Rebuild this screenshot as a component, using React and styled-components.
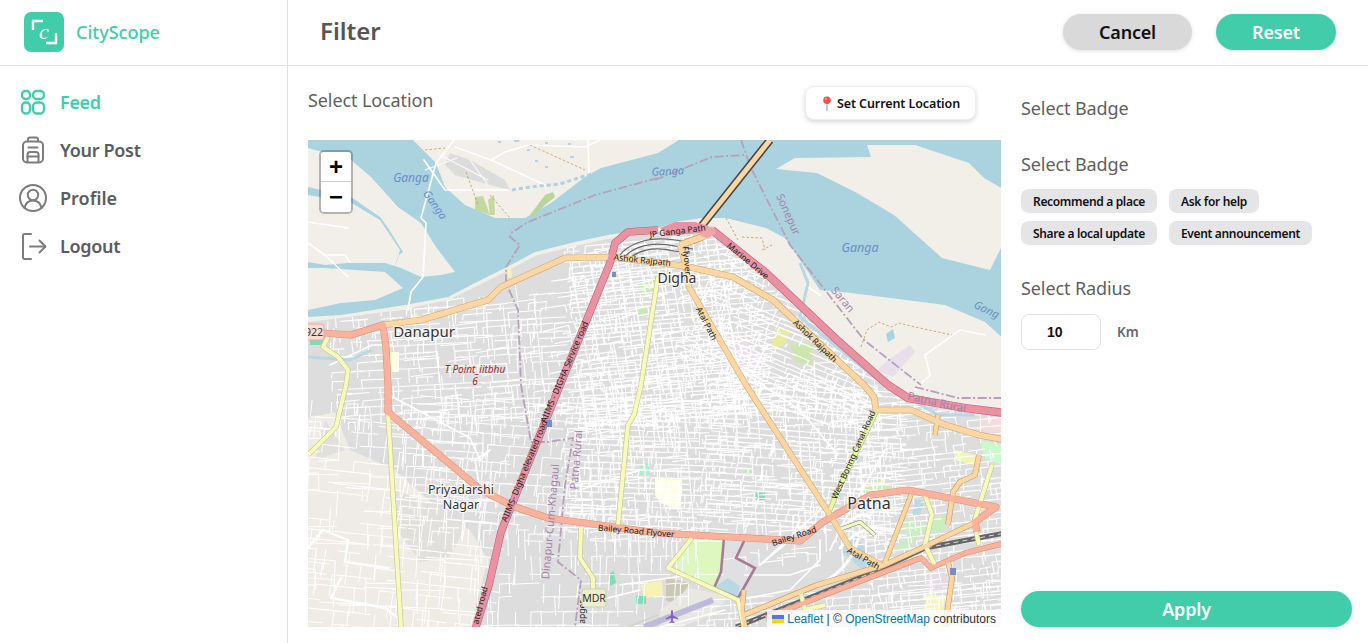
import React from "react";
import styled, { createGlobalStyle } from "styled-components";

const TEAL = "#41cdaa";
const UI = `"Noto Sans", "Open Sans", sans-serif`;

const Global = createGlobalStyle`
  html, body { margin: 0; padding: 0; background: #fff; overflow: hidden; }
  * { box-sizing: border-box; }
`;

const Page = styled.div`
  display: flex;
  width: 1368px;
  height: 643px;
  font-family: ${UI};
  color: #555;
  background: #fff;
`;
const Sidebar = styled.aside`
  width: 288px;
  flex: none;
  border-right: 1px solid #e2e2e2;
`;
const Brand = styled.div`
  height: 66px;
  display: flex;
  align-items: center;
  gap: 12px;
  padding: 0 0 2px 24px;
  border-bottom: 1px solid #e2e2e2;
`;
const LogoMark = styled.div`
  position: relative;
  width: 40px;
  height: 40px;
  border-radius: 7px;
  background: ${TEAL};
  display: flex;
  align-items: center;
  justify-content: center;
  font-family: "Liberation Serif", serif;
  font-style: italic;
  font-size: 22px;
  line-height: 36px;
  color: #fff;
`;
const LogoCorners = styled.svg`
  position: absolute;
  inset: 0;
`;
const BrandName = styled.span`
  color: ${TEAL};
  font-size: 18px;
  font-weight: 500;
`;
const Nav = styled.nav`
  display: flex;
  flex-direction: column;
  padding-top: 12px;
`;
const NavRow = styled.div`
  height: 48px;
  display: flex;
  align-items: center;
  gap: 12px;
  padding-left: 18px;
  font-size: 18px;
  font-weight: 600;
  letter-spacing: ${(p) => p.$track || "-0.3px"};
  color: ${(p) => (p.$active ? TEAL : "#5b5b60")};
`;
const NavIcon = styled.svg`
  width: 30px;
  height: 30px;
  flex: none;
  fill: none;
  stroke: ${(p) => (p.$active ? TEAL : "#7c7c7c")};
  stroke-width: ${(p) => p.$weight || 2};
  stroke-linecap: round;
  stroke-linejoin: round;
`;
const Main = styled.main`
  flex: 1;
  display: flex;
  flex-direction: column;
  min-width: 0;
`;
const TopBar = styled.header`
  height: 66px;
  flex: none;
  display: flex;
  align-items: center;
  padding: 0 32px 1px 32px;
  border-bottom: 1px solid #e2e2e2;
`;
const Title = styled.h1`
  margin: -3px auto 0 0;
  font-size: 24px;
  font-weight: 600;
  color: #555;
`;
const PillButton = styled.button`
  font-family: ${UI};
  height: 36px;
  width: ${(p) => p.$width || "100%"};
  margin-left: ${(p) => p.$gap || 0};
  border: none;
  border-radius: 18px;
  font-size: 18px;
  font-weight: 600;
  letter-spacing: -0.2px;
  padding: 0;
  background: ${(p) => (p.$muted ? "#d9d9d9" : TEAL)};
  color: ${(p) => (p.$muted ? "#111" : "#fff")};
  box-shadow: 0 1px 4px rgba(0, 0, 0, 0.12);
`;
const Body = styled.div`
  flex: 1;
  display: flex;
  padding-left: 20px;
  min-height: 0;
`;
const LeftCol = styled.section`
  width: 693px;
  flex: none;
  display: flex;
  flex-direction: column;
`;
const LocationHead = styled.div`
  height: 74px;
  flex: none;
  display: flex;
  justify-content: space-between;
  align-items: flex-start;
  padding: 20px 25px 0 0;
`;
const Label = styled.h2`
  margin: 0;
  font-size: 18px;
  line-height: 28px;
  font-weight: 400;
  color: #5f5f5f;
  letter-spacing: -0.1px;
`;
const LocationButton = styled.button`
  font-family: ${UI};
  height: 34px;
  width: 171px;
  display: flex;
  align-items: center;
  justify-content: center;
  gap: 4px;
  background: #fff;
  border: 1px solid #eee;
  border-radius: 9px;
  box-shadow: 0 2px 5px rgba(0, 0, 0, 0.16);
  font-size: 12.5px;
  font-weight: 600;
  letter-spacing: -0.1px;
  color: #111;
  padding: 0;
`;
const MapFrame = styled.div`
  position: relative;
  width: 693px;
  height: 487px;
  overflow: hidden;
  background: #aad3df;
`;
const MapArt = styled.svg`
  display: block;
  width: 693px;
  height: 487px;
`;
const ZoomBox = styled.div`
  position: absolute;
  left: 11px;
  top: 10px;
  width: 34px;
  border: 2px solid rgba(0, 0, 0, 0.25);
  border-radius: 5px;
  background-clip: padding-box;
  overflow: hidden;
`;
const ZoomBtn = styled.div`
  height: 30px;
  display: flex;
  align-items: center;
  justify-content: center;
  background: #fff;
  color: #000;
  font-family: "Liberation Sans", sans-serif;
  font-weight: 700;
  font-size: 24px;
  line-height: 30px;
  border-bottom: ${(p) => (p.$last ? "none" : "1px solid #ccc")};
`;
const Attribution = styled.div`
  position: absolute;
  right: 0;
  bottom: 0;
  height: 17px;
  padding: 0 5px;
  display: flex;
  align-items: center;
  gap: 3px;
  background: rgba(255, 255, 255, 0.8);
  font-family: "Liberation Sans", sans-serif;
  font-size: 12px;
  color: #333;
  white-space: pre;
`;
const AttrLink = styled.span`
  color: #0078a8;
`;
const RightCol = styled.section`
  flex: 1;
  display: flex;
  flex-direction: column;
  padding: 28px 16px 16px 20px;
`;
const BadgeHead = styled(Label)`
  margin-bottom: ${(p) => p.$after || 0};
`;
const ChipWrap = styled.div`
  display: flex;
  flex-wrap: wrap;
  gap: 8px 12px;
  width: 300px;
  margin-bottom: 29px;
`;
const Chip = styled.span`
  height: 24px;
  display: flex;
  align-items: center;
  padding: 0 12px;
  border-radius: 8px;
  background: #e5e5e8;
  font-size: 12px;
  font-weight: 600;
  letter-spacing: -0.33px;
  color: #111;
  white-space: nowrap;
`;
const RadiusRow = styled.div`
  display: flex;
  align-items: center;
  gap: 16px;
  margin-top: 12px;
`;
const RadiusInput = styled.input`
  width: 80px;
  height: 36px;
  border: 1px solid #e2e2e2;
  border-radius: 8px;
  padding: 0 0 0 25px;
  font-family: "Liberation Sans", sans-serif;
  font-size: 14px;
  font-weight: 700;
  color: #111;
  outline: none;
`;
const Unit = styled.span`
  font-size: 13.5px;
  font-weight: 600;
  color: #666;
`;
const Spacer = styled.div`
  flex: 1;
`;

/* ---------- map data (coordinates are the page's, via the svg viewBox) ---------- */

const pts = (a) => "M" + a.map((p) => p.join(" ")).join("L");
const poly = (a) => a.map((p) => p.join(",")).join(" ");

const southBank = [[308,317],[341,315],[405,305],[448,297],[475,283],[505,268],[535,252],[575,242],[608,235],[658,228],[675,222],[702,218],[726,218],[766,228],[785,238],[800,260],[820,290],[851,293],[945,305],[985,322],[1005,340],[1005,630],[308,630]];
const urban = [[308,322],[341,318],[405,309],[448,300],[475,287],[505,272],[535,256],[575,246],[608,239],[658,232],[712,226],[766,273],[837,340],[885,385],[908,398],[965,410],[1005,414],[1005,630],[308,630]];
const northBank = [[411,138],[436,163],[445,187],[465,205],[495,218],[525,218],[551,203],[585,177],[601,168],[658,153],[682,138]];
const sandA = [[308,148],[351,160],[371,177],[398,207],[421,223],[436,247],[455,272],[441,275],[421,277],[401,268],[395,266],[399,255],[403,252],[388,228],[380,217],[351,197],[308,187]];
const sandB = [[308,195],[350,202],[380,220],[400,250],[395,266],[385,263],[348,263],[325,265],[308,262]];
const sandC = [[308,268],[325,268],[385,272],[403,288],[375,300],[341,303],[308,310]];
const sandNE = [[776,169],[795,158],[871,157],[867,145],[915,145],[969,163],[984,178],[1005,190],[1005,240],[990,270],[942,258],[894,215],[857,193],[817,173]];
const rural = [[308,418],[335,412],[350,450],[395,470],[440,510],[470,530],[488,560],[470,630],[308,630]];

const mulberry = (s) => () => {
  s |= 0; s = (s + 0x6d2b79f5) | 0;
  let t = Math.imul(s ^ (s >>> 15), 1 | s);
  t = (t + Math.imul(t ^ (t >>> 7), 61 | t)) ^ t;
  return ((t ^ (t >>> 14)) >>> 0) / 4294967296;
};
const streets = (seed, x0, y0, x1, y1, step, fill) => {
  const r = mulberry(seed);
  let d = "";
  for (let y = y0; y < y1; y += step * (0.7 + r() * 0.6)) {
    let x = x0 + r() * 10;
    const tilt = (r() - 0.5) * 2.4;
    while (x < x1) {
      const len = 6 + r() * 26;
      if (r() < fill) {
        d += `M${x.toFixed(1)} ${y.toFixed(1)}L${(x + len).toFixed(1)} ${(y + tilt).toFixed(1)}`;
      }
      if (r() < fill) {
        const h = step * (0.6 + r() * 1.8);
        d += `M${x.toFixed(1)} ${y.toFixed(1)}L${(x + (r() - 0.5) * 3).toFixed(1)} ${(y + h).toFixed(1)}`;
      }
      x += len * (0.5 + r() * 0.5);
    }
  }
  return d;
};

const streetLayers = [
  { d: streets(3, 330, 300, 560, 420, 7, 0.72), t: "rotate(-3 440 360)", w: 1.1 },
  { d: streets(41, 400, 300, 560, 420, 16, 0.5), t: "rotate(84 480 360)", w: 1 },
  { d: streets(5, 400, 400, 560, 540, 9, 0.6), t: "rotate(4 480 470)", w: 1 },
  { d: streets(7, 300, 410, 490, 640, 12, 0.55), t: "rotate(6 400 520)", w: 1 },
  { d: streets(43, 300, 440, 490, 640, 26, 0.5), t: "rotate(92 400 520)", w: 1 },
  { d: streets(11, 480, 530, 700, 640, 14, 0.5), t: "", w: 1 },
  { d: streets(13, 570, 240, 760, 420, 4.6, 0.86), t: "rotate(-5 660 330)", w: 1.2 },
  { d: streets(47, 570, 260, 760, 420, 11, 0.7), t: "rotate(80 660 330)", w: 1.2 },
  { d: streets(17, 560, 400, 720, 530, 5.5, 0.8), t: "rotate(2 640 460)", w: 1.15 },
  { d: streets(53, 560, 400, 720, 530, 12, 0.65), t: "rotate(85 640 460)", w: 1.1 },
  { d: streets(19, 690, 270, 880, 390, 5.6, 0.78), t: "rotate(22 780 330)", w: 1.2 },
  { d: streets(23, 700, 380, 900, 530, 5.4, 0.8), t: "rotate(4 800 460)", w: 1.15 },
  { d: streets(59, 700, 380, 900, 530, 12, 0.65), t: "rotate(86 800 460)", w: 1.1 },
  { d: streets(29, 860, 400, 1005, 630, 6.5, 0.72), t: "rotate(-6 930 500)", w: 1.1 },
  { d: streets(31, 700, 590, 1005, 640, 6, 0.75), t: "rotate(-4 850 610)", w: 1 },
];

const whiteRoads = [
  [[454,140],[436,163],[421,218],[426,223],[423,277],[411,292],[408,310]],
  [[455,147],[491,160],[545,185]],
  [[491,160],[505,152],[528,145],[585,147],[600,140]],
  [[588,140],[589,173]],
  [[424,160],[445,190],[465,190],[508,190]],
  [[308,222],[348,228]],
  [[308,243],[325,255],[348,277]],
  [[324,255],[345,255],[350,262]],
  [[389,395],[470,438],[480,460],[490,450],[475,460],[480,490]],
  [[580,490],[640,470],[690,472]],
  [[838,455],[800,410],[740,370]],
  [[705,390],[760,400],[830,425]],
  [[766,346],[745,390],[725,410]],
  [[885,450],[845,520],[830,550]],
  [[825,505],[760,565]],
  [[760,565],[790,540],[800,520]],
  [[738,600],[790,590],[820,560],[820,540]],
  [[745,575],[790,575],[820,565]],
  [[725,610],[660,627]],
  [[640,590],[600,600]],
  [[620,585],[690,575]],
  [[330,365],[372,345],[392,345]],
  [[860,400],[876,410],[860,430],[900,430]],
  [[915,390],[930,375],[925,355],[960,330],[985,335]],
  [[805,285],[820,295]],
];
const casedRoads = [
  { d: [[658,277],[641,385],[634,415],[628,425],[618,525]], c: "#f7fabf", e: "#c3c57e", w: 4 },
  { d: [[581,528],[580,558],[593,578],[593,595]], c: "#f7fabf", e: "#c3c57e", w: 4 },
  { d: [[388,412],[401,627]], c: "#f7fabf", e: "#c3c57e", w: 4 },
  { d: [[328,337],[323,347],[338,357],[348,370],[346,385],[336,427],[308,455]], c: "#f7fabf", e: "#c3c57e", w: 4 },
  { d: [[876,412],[837,492],[830,510]], c: "#e9f3a4", e: "#b5b96c", w: 4 },
  { d: [[692,538],[668,568],[738,600],[744,627]], c: "#f7fabf", e: "#c3c57e", w: 4 },
  { d: [[992,465],[974,522],[979,545]], c: "#f7fabf", e: "#c3c57e", w: 4 },
  { d: [[838,530],[860,522],[875,535]], c: "#f7fabf", e: "#777", w: 3 },
  { d: [[925,495],[932,515],[925,545],[935,565]], c: "#f7fabf", e: "#c3c57e", w: 4 },
  { d: [[800,590],[805,610],[825,605]], c: "#f7fabf", e: "#c3c57e", w: 4 },
  { d: [[700,228],[770,140]], c: "#fcd6a4", e: "#444", w: 5, ew: 8 },
  { d: [[680,245],[702,237],[714,230]], c: "#fcd6a4", e: "#c99f58", w: 6 },
  { d: [[383,325],[421,320],[488,300],[501,287],[565,258],[610,257],[655,262],[689,267],[733,277],[773,300],[837,360],[864,385],[874,397],[876,410],[911,410],[945,425],[979,435],[1005,440]], c: "#fcd6a4", e: "#cda966", w: 5.5 },
  { d: [[680,245],[685,263],[689,287],[746,385],[830,515],[850,548],[881,565]], c: "#fcd6a4", e: "#d1ac69", w: 5 },
  { d: [[744,615],[817,585],[884,565],[928,545],[974,523]], c: "#fcd6a4", e: "#c99f58", w: 4.5 },
  { d: [[911,495],[884,565]], c: "#fcd6a4", e: "#c99f58", w: 4 },
  { d: [[979,455],[975,475],[960,482],[953,492],[948,525]], c: "#fcd6a4", e: "#c99f58", w: 4.5 },
  { d: [[948,562],[952,578],[945,627]], c: "#fcd6a4", e: "#c99f58", w: 4.5 },
  { d: [[744,590],[742,610],[745,627]], c: "#fcd6a4", e: "#c99f58", w: 4 },
  { d: [[938,415],[935,435]], c: "#fcd6a4", e: "#c99f58", w: 4 },
  { d: [[308,332],[351,335],[383,325],[386,347],[388,385],[388,412],[481,490],[515,507],[548,518],[658,533],[800,541],[823,522],[871,495],[908,490],[996,507],[975,522],[977,532]], c: "#f9b29c", e: "#e0937b", w: 6 },
  { d: [[766,618],[824,595],[921,558],[931,568],[965,553],[1005,543]], c: "#f9b29c", e: "#e0937b", w: 4.5 },
  { d: [[712,230],[766,273],[837,340],[888,385],[908,398],[965,408],[1005,413]], c: "#e892a2", e: "#d35b78", w: 7 },
  { d: [[658,230],[628,232],[615,243],[610,263],[545,422],[501,532],[489,585],[475,630]], c: "#e892a2", e: "#c15f78", w: 6.5 },
];
const boundaries = [
  [[658,178],[595,195],[528,222],[511,233],[510,237],[520,245],[506,267],[506,283],[518,310],[521,385],[531,442],[548,442],[573,438],[565,485],[558,562],[581,580],[575,627]],
  [[655,180],[712,157],[744,155]],
  [[741,140],[751,168],[790,245],[864,340],[921,385]],
  [[915,387],[958,398],[1005,398]],
];
const waterLines = [
  [[800,263],[808,283],[800,317],[878,380],[938,415],[975,415]],
  [[308,357],[350,360],[372,350]],
];
const tracks = [[736,627],[874,572],[925,548],[1005,533]];
const brownDashes = [
  [[425,150],[445,148]],[[466,172],[478,205]],[[490,195],[510,218]],[[530,145],[585,170]],
  [[738,240],[726,218]],[[742,237],[762,238],[765,250]],[[762,250],[772,245]],
  [[861,347],[867,330],[879,322],[891,327],[899,323],[915,327],[952,335]],
];
const placeLabels = [
  { t: "Danapur", x: 424, y: 337, s: 15 },
  { t: "Digha", x: 677, y: 283, s: 14 },
  { t: "Priyadarshi", x: 461, y: 494, s: 12.5 },
  { t: "Nagar", x: 461, y: 509, s: 12.5 },
  { t: "Patna", x: 869, y: 509, s: 16 },
];
const waterLabels = [
  { t: "Ganga", x: 411, y: 182, r: 0, s: 12 },
  { t: "Ganga", x: 432, y: 207, r: 55, s: 11 },
  { t: "Ganga", x: 668, y: 175, r: -3, s: 11 },
  { t: "Ganga", x: 860, y: 252, r: 0, s: 12.5 },
  { t: "Gang", x: 985, y: 313, r: 26, s: 11 },
];
const adminLabels = [
  { t: "Sonepur", x: 785, y: 216, r: 66, s: 11 },
  { t: "Saran", x: 840, y: 302, r: 50, s: 11 },
  { t: "Patna Rural", x: 580, y: 460, r: -85, s: 11 },
  { t: "Dinapur-Cum-Khagaul", x: 554, y: 522, r: -85, s: 11 },
  { t: "Patna Rural", x: 936, y: 406, r: 13, s: 11 },
];
const roadLabels = [
  { t: "JP Ganga Path", x: 678, y: 234, r: -7 },
  { t: "Ashok Rajpath", x: 642, y: 263, r: 6 },
  { t: "Flyover", x: 684, y: 261, r: 84 },
  { t: "Marine Drive", x: 746, y: 263, r: 40 },
  { t: "Ashok Rajpath", x: 813, y: 343, r: 44 },
  { t: "Atal Path", x: 704, y: 325, r: 63 },
  { t: "Atal Path", x: 862, y: 561, r: 30 },
  { t: "AIIMS - DIGHA Service road", x: 567, y: 373, r: -67 },
  { t: "AIIMS- Digha elevated road", x: 527, y: 472, r: -68 },
  { t: "ated road", x: 483, y: 606, r: -76 },
  { t: "Bailey Road Flyover", x: 636, y: 534, r: 5 },
  { t: "Bailey Road", x: 795, y: 539, r: -18 },
  { t: "West Boring Canal Road", x: 856, y: 456, r: -66 },
  { t: "apger", x: 585, y: 612, r: -90 },
];
const parks = [
  { p: [[641,280],[655,278],[658,292],[645,296],[637,290]], c: "#c9eab2" },
  { p: [[636,306],[645,305],[647,316],[638,316]], c: "#c9eab2" },
  { p: [[687,538],[724,538],[717,588],[712,587],[675,567]], c: "#def6c0" },
  { p: [[980,440],[1005,446],[1005,466],[985,458]], c: "#c8facc" },
  { p: [[655,478],[682,480],[680,510],[660,503],[655,495]], c: "#ffffe5" },
  { p: [[720,337],[738,335],[766,358],[745,378],[725,360]], c: "#e8dfe8" },
  { p: [[776,328],[790,330],[785,345],[770,350]], c: "#e6eba0" },
  { p: [[790,345],[812,342],[812,365],[795,362]], c: "#cde6b0" },
  { p: [[888,360],[910,345],[915,352],[893,377],[877,370]], c: "#e8dfe8" },
  { p: [[886,334],[893,329],[895,338],[888,342]], c: "#aad3df" },
  { p: [[640,465],[650,462],[650,475],[640,475]], c: "#adf0cf" },
  { p: [[755,493],[765,492],[765,500],[755,500]], c: "#7fdcb5" },
  { p: [[744,468],[752,468],[752,476],[744,476]], c: "#c4ecc0" },
  { p: [[610,573],[614,571],[616,583],[610,586]], c: "#7fdcb5" },
  { p: [[640,585],[662,580],[663,596],[645,598]], c: "#f5f3b5" },
  { p: [[636,596],[646,596],[646,604],[636,604]], c: "#7fdcb5" },
  { p: [[666,578],[690,583],[685,590],[674,604],[666,600]], c: "#c8c8b4" },
  { p: [[860,490],[880,478],[895,490],[870,498]], c: "#d4eab0" },
  { p: [[838,548],[855,535],[880,570],[860,568]], c: "#bad9e3" },
  { p: [[895,548],[925,520],[925,530],[905,550]], c: "#c9efc0" },
  { p: [[905,520],[915,520],[915,535],[905,535]], c: "#c9efc0" },
  { p: [[932,520],[945,515],[945,530],[932,535]], c: "#c9efc0" },
  { p: [[915,500],[925,500],[920,515],[912,515]], c: "#bad9e3" },
  { p: [[925,575],[945,565],[950,575],[945,590],[925,590]], c: "#e4dbe6" },
  { p: [[955,450],[975,455],[975,465],[955,460]], c: "#f3f6b2" },
  { p: [[978,420],[1005,418],[1005,438],[985,432]], c: "#f2dcdc" },
  { p: [[926,595],[945,595],[942,627],[922,627]], c: "#f7f7b0" },
  { p: [[327,345],[310,345],[310,340],[327,340]], c: "#7fdcb5" },
  { p: [[390,352],[399,352],[399,372],[390,372]], c: "#ffffe5" },
  { p: [[507,268],[511,267],[512,277],[508,278]], c: "#f5f3b5" },
  { p: [[412,315],[418,313],[417,322],[412,322]], c: "#f5f3b5" },
  { p: [[475,197],[483,196],[490,215],[475,210]], c: "#c4d9a0" },
  { p: [[488,200],[494,195],[495,215],[490,215]], c: "#c4d9a0" },
  { p: [[530,215],[545,195],[553,192],[555,197],[545,205],[532,218]], c: "#b7d69c" },
];
const greyNorth = [[450,153],[470,160],[505,180],[510,190],[490,185],[455,175],[445,165]];

const LogoBrackets = () => (
  <LogoCorners viewBox="0 0 40 40" fill="none" stroke="#fff" strokeWidth="2.4">
    <path d="M9 18V9h10" />
    <path d="M32 21v10H22" />
  </LogoCorners>
);

const FeedIcon = () => (
  <NavIcon viewBox="0 0 30 30" $active $weight={2.3}>
    <rect x="4" y="4" width="8" height="8" rx="3.4" />
    <rect x="15" y="4" width="11" height="8" rx="3.8" />
    <rect x="4" y="15.5" width="8" height="11" rx="3.6" />
    <rect x="15" y="15.5" width="11" height="11" rx="4" />
  </NavIcon>
);
const PackIcon = () => (
  <NavIcon viewBox="0 0 30 30">
    <rect x="5" y="6.5" width="20" height="21" rx="4" />
    <path d="M10 6.5V4.5a2 2 0 0 1 2-2h6a2 2 0 0 1 2 2v2" />
    <path d="M9.5 27v-7.500a2.500 2.500 0 0 1 2.500-2.500h6a2.500 2.500 0 0 1 2.500 2.500V27" />
    <path d="M9.5 21.500h11" />
    <path d="M10.500 12.500h9" />
  </NavIcon>
);
const ProfileIcon = () => (
  <NavIcon viewBox="0 0 30 30">
    <circle cx="15" cy="15" r="13" />
    <circle cx="15" cy="12" r="5.200" />
    <path d="M6.500 25c1-4.600 4.200-7.500 8.500-7.500s7.500 2.900 8.500 7.500" />
  </NavIcon>
);
const LogoutIcon = () => (
  <NavIcon viewBox="0 0 30 30">
    <path d="M13 3H6.500A1.500 1.500 0 0 0 5 4.500v22A1.500 1.500 0 0 0 6.500 28H13" />
    <path d="M12 15.500h15" />
    <path d="M21.500 9.500l6 6-6 6" />
  </NavIcon>
);

const Pin = () => (
  <svg width="12" height="15" viewBox="0 0 12 15">
    <path d="M6 7v8" stroke="#a9c4d6" strokeWidth="1.6" strokeLinecap="round" />
    <circle cx="6" cy="4.200" r="3.800" fill="#f0524f" />
    <circle cx="4.800" cy="3" r="1" fill="#f9a3a0" />
  </svg>
);

const Plane = () => (
  <path
    transform="translate(672 617) scale(0.62)"
    fill="#8461c9"
    d="M-1.500 -10 C-0.700 -11.500 0.700 -11.500 1.500 -10 L1.500 -3 L10 2 L10 4 L1.500 1.500 L1.500 6.500 L4 8.500 L4 10 L0 9 L-4 10 L-4 8.500 L-1.500 6.500 L-1.500 1.500 L-10 4 L-10 2 L-1.500 -3 Z"
  />
);

const OsmMap = () => (
  <MapArt viewBox="308 140 693 487">
    <defs>
      <clipPath id="urbanClip">
        <polygon points={poly(urban)} />
      </clipPath>
    </defs>
    <rect x="300" y="130" width="710" height="510" fill="#aad3df" />
    <polygon points={poly(southBank)} fill="#f2efe9" />
    <polygon points={poly(northBank)} fill="#f2efe9" />
    <polygon points={poly(sandA)} fill="#f2efe9" />
    <polygon points={poly(sandB)} fill="#f2efe9" />
    <polygon points={poly(sandC)} fill="#f2efe9" />
    <polygon points={poly(sandNE)} fill="#f2efe9" />
    <polygon points={poly(urban)} fill="#dddddd" />
    <polygon points={poly(rural)} fill="#efece5" />
    <polygon points={poly(greyNorth)} fill="#dcdcdc" />
    <path d="M395 490l40 15 30 22-15 30-30 5-25-35zM325 420l20 30-30 10z" fill="#e2e0dc" />
    {parks.map((a, i) => (
      <polygon key={i} points={poly(a.p)} fill={a.c} />
    ))}
    <polygon points="724,538 745,539 736,558 755,568 738,598 714,588 721,572" fill="#dfe0e2" />
    <path d="M716 586l12-8 12 8-3 10-20-6z" fill="#b8d8e4" />
    <path d="M660 610l30-22 40 8-20 20-30 11h-20z" fill="#e9e7e2" />
    <g clipPath="url(#urbanClip)" fill="none" stroke="#fff" strokeLinecap="round">
      {streetLayers.map((l, i) => (
        <path key={i} d={l.d} transform={l.t} strokeWidth={l.w} />
      ))}
    </g>
    <g fill="none" stroke="#fff" strokeLinecap="round" strokeLinejoin="round" strokeWidth="1.700">
      {whiteRoads.map((r, i) => (
        <path key={i} d={pts(r)} />
      ))}
      <path d="M440 155l48 25M425 170l32-12M470 160l18 25" strokeWidth="1.100" stroke="#fbfbfb" />
      <path d="M308 548l15-18 25 10-3 22 43 6M341 578l-10 20 54 10 13 10" strokeWidth="2.400" />
      <path d="M838 530c15-12 25-20 32-12M840 548c20-22 40-26 60-12M800 590c25-5 50-20 58-50" strokeWidth="3" />
    </g>
    <g fill="none" stroke="#b8d8e4" strokeLinejoin="round" strokeWidth="3">
      {waterLines.map((r, i) => (
        <path key={i} d={pts(r)} />
      ))}
    </g>
    <path d="M512 190l18-3 30-3 18-6 22-6" fill="none" stroke="#aad3df" strokeWidth="3" strokeDasharray="4 3" />
    <path d="M498 142h3M514 141h5M545 143h3M568 144h3M527 150h3M570 157h4M535 161h3M545 167h3" stroke="#7fb2ea" strokeWidth="1" />
    <g fill="none" stroke="#c9a25f" strokeWidth="0.900" strokeDasharray="2.500 2">
      {brownDashes.map((r, i) => (
        <path key={i} d={pts(r)} />
      ))}
    </g>
    <g fill="none" stroke="#b7a0bc" strokeWidth="1.800" strokeDasharray="9 2.500 2 2.500">
      {boundaries.map((r, i) => (
        <path key={i} d={pts(r)} />
      ))}
    </g>
    <path d="M644 627l69-27" stroke="#bcbcd8" strokeWidth="6" />
    <path d="M628 627l30-12" stroke="#d4d4c4" strokeWidth="1.500" />
    <polygon points="724,538 745,539 736,558 755,568 738,598 714,588 721,572" fill="none" stroke="#9a6c85" strokeWidth="2.600" strokeOpacity="0.85" />
    <path d={pts(tracks)} fill="none" stroke="#666" strokeWidth="5" />
    <path d={pts(tracks)} fill="none" stroke="#ddd" strokeWidth="1" strokeDasharray="5 4" />
    <path d="M618 258c8-14 30-22 57-18l20 3M622 260c10-14 30-19 53-14l18 3M626 262c10-12 28-16 48-11l16 2" fill="none" stroke="#666" strokeWidth="1.200" />
    <g fill="none" strokeLinejoin="round" strokeLinecap="butt">
      {casedRoads.map((r, i) => (
        <path key={"e" + i} d={pts(r.d)} stroke={r.e} strokeWidth={r.ew || r.w + 1.200} />
      ))}
      {casedRoads.map((r, i) => (
        <path key={"f" + i} d={pts(r.d)} stroke={r.c} strokeWidth={r.w} />
      ))}
    </g>
    <polygon points="660,228 675,222 695,222 708,226 710,232 690,234 668,236" fill="#e892a2" />
    <polygon points="706,226 714,228 716,234 708,238 700,236" fill="#f0a6a6" />
    <rect x="546" y="420" width="6" height="7" fill="#7b8ec4" />
    <rect x="612" y="272" width="4" height="5" fill="#7b8ec4" />
    <rect x="950" y="568" width="6" height="7" fill="#7b8ec4" />
    <Plane />
    <g fontFamily={UI} textAnchor="middle">
      {waterLabels.map((l, i) => (
        <text key={i} x={l.x} y={l.y} fontSize={l.s} fontStyle="italic" fill="#6a8fc4" transform={`rotate(${l.r} ${l.x} ${l.y})`}>{l.t}</text>
      ))}
      {adminLabels.map((l, i) => (
        <text key={i} x={l.x} y={l.y} fontSize={l.s} fill="#a483ab" transform={`rotate(${l.r} ${l.x} ${l.y})`}>{l.t}</text>
      ))}
      {placeLabels.map((l, i) => (
        <text key={i} x={l.x} y={l.y} fontSize={l.s} fill="#333" stroke="#fff" strokeOpacity="0.75" strokeWidth="2.500" paintOrder="stroke">{l.t}</text>
      ))}
      {roadLabels.map((l, i) => (
        <text key={i} x={l.x} y={l.y} fontSize="8.500" fill="#222" transform={`rotate(${l.r} ${l.x} ${l.y})`}>{l.t}</text>
      ))}
      <text x="475" y="373" fontSize="10" fontStyle="italic" fill="#a1262c">T Point_iitbhu</text>
      <text x="475" y="385" fontSize="10" fontStyle="italic" fill="#a1262c">6</text>
      <rect x="582" y="589" width="24" height="18" rx="3" fill="#ecefcf" stroke="#cfd2a5" />
      <text x="594" y="602" fontSize="10.500" fill="#333">MDR</text>
      <rect x="300" y="324" width="24" height="16" rx="3" fill="#fbdcd2" stroke="#e7ab9a" />
      <text x="314" y="336" fontSize="10.500" fill="#333">922</text>
    </g>
  </MapArt>
);

const badges = ["Recommend a place", "Ask for help", "Share a local update", "Event announcement"];

export default function App() {
  return (
    <Page>
      <Global />
      <Sidebar>
        <Brand>
          <LogoMark>
            <LogoBrackets />c
          </LogoMark>
          <BrandName>CityScope</BrandName>
        </Brand>
        <Nav>
          <NavRow $active>
            <FeedIcon />
            Feed
          </NavRow>
          <NavRow>
            <PackIcon />
            Your Post
          </NavRow>
          <NavRow $track="0">
            <ProfileIcon />
            Profile
          </NavRow>
          <NavRow>
            <LogoutIcon />
            Logout
          </NavRow>
        </Nav>
      </Sidebar>
      <Main>
        <TopBar>
          <Title>Filter</Title>
          <PillButton $muted $width="129px">Cancel</PillButton>
          <PillButton $width="120px" $gap="24px">Reset</PillButton>
        </TopBar>
        <Body>
          <LeftCol>
            <LocationHead>
              <Label>Select Location</Label>
              <LocationButton>
                <Pin />
                Set Current Location
              </LocationButton>
            </LocationHead>
            <MapFrame>
              <OsmMap />
              <ZoomBox>
                <ZoomBtn>+</ZoomBtn>
                <ZoomBtn $last>−</ZoomBtn>
              </ZoomBox>
              <Attribution>
                <svg width="12" height="8" viewBox="0 0 12 8">
                  <rect width="12" height="4" fill="#4c7be1" />
                  <rect y="4" width="12" height="4" fill="#ffd500" />
                </svg>
                <span>
                  <AttrLink>Leaflet</AttrLink> | © <AttrLink>OpenStreetMap</AttrLink> contributors
                </span>
              </Attribution>
            </MapFrame>
          </LeftCol>
          <RightCol>
            <BadgeHead $after="28px">Select Badge</BadgeHead>
            <BadgeHead $after="11px">Select Badge</BadgeHead>
            <ChipWrap>
              {badges.map((b) => (
                <Chip key={b}>{b}</Chip>
              ))}
            </ChipWrap>
            <Label>Select Radius</Label>
            <RadiusRow>
              <RadiusInput readOnly value="10" />
              <Unit>Km</Unit>
            </RadiusRow>
            <Spacer />
            <PillButton>Apply</PillButton>
          </RightCol>
        </Body>
      </Main>
    </Page>
  );
}
